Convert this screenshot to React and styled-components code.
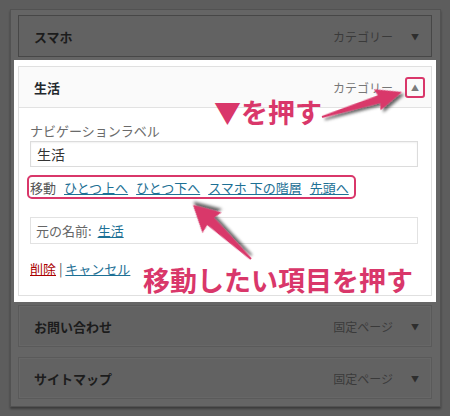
import React from "react";
import styled, { createGlobalStyle } from "styled-components";

const PINK = "#d9376a";
const LINK = "#1d7095";

const GlobalStyle = createGlobalStyle`
  html, body {
    margin: 0;
    padding: 0;
    background: #5d5d5d;
  }
  body {
    font-family: "Noto Sans CJK JP", "Noto Sans", sans-serif;
    font-size: 13px;
    color: #333;
  }
`;

const Page = styled.div`
  position: relative;
  width: 450px;
  height: 416px;
  padding: 9px 0 0 10px;
  box-sizing: border-box;
  overflow: hidden;
`;

const Panel = styled.div`
  width: 431px;
  box-sizing: border-box;
  background: #656565;
  border: 1px solid #525252;
  box-shadow: 0 2px 2px rgba(0, 0, 0, 0.35);
  padding: 5px 8px 7px 7px;
  display: flex;
  flex-direction: column;
`;

const DimItem = styled.div`
  height: 42px;
  box-sizing: border-box;
  margin-top: ${(p) => p.$top || 0}px;
  background: #626262;
  border: 1px solid ${(p) => (p.$dark ? "#474747" : "#5a5a5a")};
  box-shadow: ${(p) => (p.$dark ? "none" : "inset 0 0 0 1px #676767")};
  display: flex;
  align-items: center;
  padding: 0 6px 0 15px;
`;

const Title = styled.span`
  font-size: 13px;
  font-weight: 700;
  color: ${(p) => (p.$dim ? "#1c1c1c" : "#23282d")};
  flex: 1;
`;

const TypeLabel = styled.span`
  font-size: 12px;
  color: ${(p) => (p.$dim ? "#3a3a3a" : "#777")};
  margin-right: 12px;
`;

const Arrow = styled.span`
  width: 20px;
  height: 21px;
  box-sizing: border-box;
  display: flex;
  align-items: center;
  justify-content: center;
  font-size: 8px;
  color: ${(p) => (p.$dim ? "#2e2e2e" : "#7b7b7b")};
  border: ${(p) => (p.$marked ? `2.5px solid ${PINK}` : "none")};
  border-radius: 3px;
`;

const Spotlight = styled.div`
  margin: 3px -4px 0 -4px;
  padding: 6px 4px;
  background: #fff;
`;

const OpenItem = styled.div`
  border: 1px solid #e0e0e0;
  background: #fff;
`;

const OpenHeader = styled.div`
  height: 41px;
  box-sizing: border-box;
  background: #fafafa;
  border-bottom: 1px solid #e2e2e2;
  display: flex;
  align-items: center;
  padding: 0 6px 0 15px;
`;

const Body = styled.div`
  padding: 14px 13px 17px 11px;
  display: flex;
  flex-direction: column;
  align-items: flex-start;
`;

const FieldLabel = styled.div`
  font-size: 13px;
  line-height: 18px;
  color: #6a6a6a;
`;

const Input = styled.div`
  margin-top: 1px;
  width: 100%;
  height: 26px;
  box-sizing: border-box;
  border: 1px solid #dcdcdc;
  box-shadow: inset 0 1px 2px rgba(0, 0, 0, 0.06);
  display: flex;
  align-items: center;
  padding: 0 6px;
  font-size: 14px;
  color: #333;
`;

const MoveRow = styled.div`
  margin: 8px 0 0 -3px;
  height: 24px;
  box-sizing: border-box;
  display: inline-flex;
  align-items: center;
  gap: 8px;
  padding: 0 5px 0 1px;
  border: ${(p) => (p.$marked ? `2.5px solid ${PINK}` : "none")};
  border-radius: 5px;
  font-size: 13px;
  color: #555;
`;

const TextLink = styled.a`
  color: ${(p) => (p.$danger ? "#a00" : LINK)};
  text-decoration: underline;
  font-size: 13px;
  cursor: pointer;
`;

const OriginalBox = styled.div`
  margin-top: 18px;
  width: 100%;
  height: 27px;
  box-sizing: border-box;
  border: 1px solid #e2e2e2;
  display: flex;
  align-items: center;
  gap: 6px;
  padding: 0 5px;
  font-size: 13px;
  color: #666;
`;

const Actions = styled.div`
  margin-top: 16px;
  line-height: 18px;
  font-size: 13px;
  color: #555;
`;

const Callout = styled.div`
  position: absolute;
  left: ${(p) => p.$x}px;
  top: ${(p) => p.$y}px;
  font-size: ${(p) => p.$size}px;
  line-height: 1;
  font-weight: 700;
  color: ${PINK};
  white-space: nowrap;
  pointer-events: none;
`;

const Overlay = styled.svg`
  position: absolute;
  left: 0;
  top: 0;
  pointer-events: none;
`;

// tapered arrow, drawn along x from tail (0) to tip (len)
const arrowPoints = (len, head, half, neck, tail) =>
  [
    [0, -tail],
    [len - head, -neck],
    [len - head - 2, -half],
    [len, 0],
    [len - head - 2, half],
    [len - head, neck],
    [0, tail],
  ]
    .map((p) => p.join(","))
    .join(" ");

const PointerArrow = ({ from, to, head, half, neck }) => {
  const dx = to[0] - from[0];
  const dy = to[1] - from[1];
  const len = Math.sqrt(dx * dx + dy * dy);
  const angle = (Math.atan2(dy, dx) * 180) / Math.PI;
  return (
    <polygon
      points={arrowPoints(len, head, half, neck, 1)}
      transform={`translate(${from[0]} ${from[1]}) rotate(${angle})`}
      fill={PINK}
      filter="url(#shade)"
    />
  );
};

const collapsed = [
  { title: "お問い合わせ", type: "固定ページ", top: 3 },
  { title: "サイトマップ", type: "固定ページ", top: 10 },
];

const moves = ["ひとつ上へ", "ひとつ下へ", "スマホ 下の階層", "先頭へ"];

export default function App() {
  return (
    <>
      <GlobalStyle />
      <Page>
        <Panel>
          <DimItem $dark>
            <Title $dim>スマホ</Title>
            <TypeLabel $dim>カテゴリー</TypeLabel>
            <Arrow $dim>▼</Arrow>
          </DimItem>

          <Spotlight>
            <OpenItem>
              <OpenHeader>
                <Title>生活</Title>
                <TypeLabel>カテゴリー</TypeLabel>
                <Arrow $marked>▲</Arrow>
              </OpenHeader>
              <Body>
                <FieldLabel>ナビゲーションラベル</FieldLabel>
                <Input>生活</Input>
                <MoveRow $marked>
                  <span>移動</span>
                  {moves.map((m) => (
                    <TextLink key={m}>{m}</TextLink>
                  ))}
                </MoveRow>
                <OriginalBox>
                  <span>元の名前:</span>
                  <TextLink>生活</TextLink>
                </OriginalBox>
                <Actions>
                  <TextLink $danger>削除</TextLink> | <TextLink>キャンセル</TextLink>
                </Actions>
              </Body>
            </OpenItem>
          </Spotlight>

          {collapsed.map((item) => (
            <DimItem key={item.title} $top={item.top}>
              <Title $dim>{item.title}</Title>
              <TypeLabel $dim>{item.type}</TypeLabel>
              <Arrow $dim>▼</Arrow>
            </DimItem>
          ))}
        </Panel>

        <Overlay width="450" height="416" viewBox="0 0 450 416">
          <defs>
            <filter id="shade" x="-30%" y="-30%" width="160%" height="160%">
              <feDropShadow dx="2" dy="3" stdDeviation="1.6" floodColor="#000" floodOpacity="0.6" />
            </filter>
          </defs>
          <PointerArrow from={[322, 117]} to={[402, 92]} head={24} half={11} neck={4} />
          <PointerArrow from={[251, 259]} to={[193, 205]} head={24} half={14} neck={5} />
        </Overlay>

        <Callout $x={214} $y={98} $size={27}>▼を押す</Callout>
        <Callout $x={143} $y={266} $size={27}>移動したい項目を押す</Callout>
      </Page>
    </>
  );
}
